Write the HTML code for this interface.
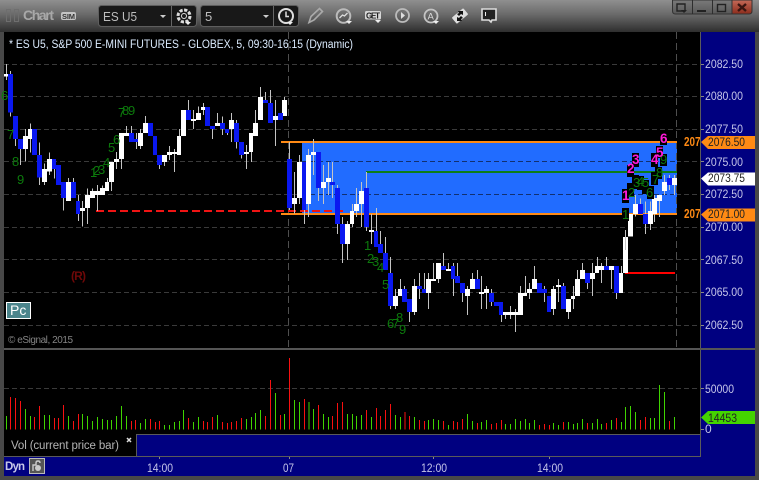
<!DOCTYPE html>
<html><head><meta charset="utf-8"><style>
html,body{margin:0;padding:0;background:#000;width:759px;height:480px;overflow:hidden}
svg{display:block}
text{font-family:"Liberation Sans",sans-serif}
.ax{fill:#c4c4e8;font-size:12px}
.g{fill:#0c7a0c;font-size:13px}
.m{fill:#ff19d8;font-size:13.500px;font-weight:bold}
</style></head><body>
<svg width="759" height="480" viewBox="0 0 759 480" xmlns="http://www.w3.org/2000/svg">
<defs>
<linearGradient id="tb" x1="0" y1="0" x2="0" y2="1"><stop offset="0" stop-color="#8f8f8f"/><stop offset=".45" stop-color="#6a6a6a"/><stop offset="1" stop-color="#2e2e2e"/></linearGradient>
<linearGradient id="cl" x1="0" y1="0" x2="0" y2="1"><stop offset="0" stop-color="#c56a58"/><stop offset="1" stop-color="#8c2c1c"/></linearGradient>
<linearGradient id="bt" x1="0" y1="0" x2="0" y2="1"><stop offset="0" stop-color="#7a7a7a"/><stop offset="1" stop-color="#585858"/></linearGradient>
<clipPath id="c207"><rect x="680" y="130" width="20" height="95"/></clipPath>
</defs>
<rect width="759" height="480" fill="#484848"/>
<rect width="759" height="32" fill="url(#tb)"/>
<rect x="4" y="32" width="751" height="444" fill="#000"/>
<rect x="701" y="32" width="54" height="444" fill="#000080"/>
<rect x="700" y="32" width="1" height="425" fill="#5a5a5a"/>

<!-- title bar -->
<g fill="none" stroke="#6e6e6e" stroke-width="1"><rect x="6.500" y="9.500" width="4" height="12"/><rect x="14.500" y="9.500" width="4" height="12"/></g>
<text x="23" y="20" font-size="14" font-weight="bold" fill="#a8a8a8" textLength="31">Chart</text>
<rect x="61" y="12" width="15" height="8" rx="2" fill="#c4c4c4"/>
<text x="62" y="19" font-size="7.500" font-weight="bold" fill="#333" textLength="13">SIM</text>
<rect x="98.500" y="5.500" width="98" height="21" rx="3" fill="#181818" stroke="#5e5e5e"/>
<rect x="200.500" y="5.500" width="98" height="21" rx="3" fill="#181818" stroke="#5e5e5e"/>
<path d="M171.500 6V26M273.500 6V26" stroke="#666"/>
<text x="103" y="21" font-size="13" fill="#bdbdbd" textLength="34" lengthAdjust="spacingAndGlyphs">ES U5</text>
<text x="205" y="21" font-size="13" fill="#bdbdbd">5</text>
<path d="M160 15h6l-3 3zM263 15h6l-3 3z" fill="#ccc"/>
<circle cx="184" cy="16" r="6" fill="none" stroke="#ddd" stroke-width="3" stroke-dasharray="3.200 1.500"/>
<circle cx="184" cy="16" r="2.500" fill="none" stroke="#ddd"/>
<path d="M185 22h6l-3 3z" fill="#eee"/>
<circle cx="286" cy="16" r="7" fill="none" stroke="#ddd" stroke-width="2"/>
<path d="M286 11.500V16.500H289" fill="none" stroke="#ddd" stroke-width="1.500"/>
<path d="M287 22h6l-3 3z" fill="#eee"/>
<path d="M309 22.500l2-6 8.500-8 3 3-8.500 8.500z" fill="none" stroke="#aaa" stroke-width="1.600"/>
<circle cx="343.500" cy="16" r="6.800" fill="none" stroke="#bbb" stroke-width="2"/>
<path d="M339.500 18l3-3 2 1 3-3" fill="none" stroke="#ddd" stroke-width="1.300"/>
<path d="M346 21h6l-3 3z" fill="#eee"/>
<rect x="365" y="11" width="16" height="8.500" rx="1.500" fill="#d6d6d6"/>
<text x="366" y="18.500" font-size="8" font-weight="bold" fill="#222" textLength="14">GET</text>
<path d="M375 20h6l-3 3z" fill="#eee"/>
<circle cx="402.500" cy="15.500" r="6.500" fill="none" stroke="#bbb" stroke-width="1.800"/>
<path d="M401 12l4 3.500-4 3.500z" fill="#ddd"/>
<circle cx="431" cy="16" r="6.500" fill="none" stroke="#c4c4c4" stroke-width="1.800"/>
<text x="427.500" y="19.500" font-size="9.500" fill="#ddd">A</text>
<path d="M433 21h6l-3 3z" fill="#eee"/>
<rect x="-7.500" y="-4" width="15" height="8" rx="1" fill="#ddd" transform="translate(460 16) rotate(-40)"/>
<path d="M458 11l5 0 0 4-2-1-2 2-2-2 2-1zM462 21l-5 0 0-4 2 1 2-2 2 2-2 1z" fill="#111"/>
<path d="M482 9h14v11h-4l-1 2-2-2h-7z" fill="#222" stroke="#ddd" stroke-width="1.600"/>
<path d="M485.500 12v4" stroke="#eee"/>
<!-- window buttons -->
<path d="M672.500 0V11q0 3 3 3H732V0z" fill="url(#bt)" stroke="#333"/>
<path d="M732 0h20v11q0 3-3 3h-17z" fill="url(#cl)" stroke="#333"/>
<path d="M692.500 0V14M712.500 0V14" stroke="#2e2e2e"/>
<path d="M677 4h8v7h-8z" fill="none" stroke="#222" stroke-width="1.400"/>
<path d="M681 10h6l-3 3z" fill="#222"/>
<path d="M697 10h9v2h-9z" fill="#222"/>
<rect x="717.500" y="4.500" width="8" height="7" fill="none" stroke="#222" stroke-width="1.400"/>
<path d="M738 4l8 7M746 4l-8 7" stroke="#3a1510" stroke-width="2.400"/>

<!-- grid -->
<g stroke="#3a3a3a" stroke-dasharray="5 3" shape-rendering="crispEdges">
<path d="M4 64.500H700M4 96.500H700M4 129.500H700M4 161.500H700M4 194.500H700M4 227.500H700M4 259.500H700M4 292.500H700M4 325.500H700"/>
<path d="M4 388.500H700" />
</g>

<!-- zone -->
<rect x="302" y="143" width="375" height="70" fill="#216cff"/>
<g stroke="#123070" stroke-dasharray="5 3" shape-rendering="crispEdges"><path d="M302 161.500H677M302 194.500H677"/></g>
<path d="M288.500 32V348M676.500 32V348" stroke="#4f4f4f" stroke-dasharray="7 4" shape-rendering="crispEdges"/>
<rect x="366" y="171" width="311" height="2" fill="#0d7d18"/>
<rect x="281" y="141" width="396" height="2" fill="#ff8a14"/>
<rect x="281" y="213" width="396" height="2" fill="#ff8a14"/>
<path d="M96 211H343" stroke="#f01414" stroke-width="2" stroke-dasharray="8 4" shape-rendering="crispEdges"/>
<rect x="625" y="272" width="50" height="2" fill="#f00"/>

<!-- candles left -->
<g transform="translate(0,60) scale(.33333)" shape-rendering="crispEdges">
<path fill="none" stroke="#c4c4c4" stroke-width="3" d="M19.500 12V60M31.500 33V170M46.500 168V258M61.500 237V315M76.500 207V305M91.500 190V277M103.500 207V285M118.500 247V375M133.500 310V375M148.500 277V345M163.500 297V355M175.500 315V375M190.500 366V452M205.500 354V423M220.500 354V414M235.500 405V483M247.500 423V500M262.500 385V492M277.500 385V414M292.500 375V453M307.500 376V405M322.500 354V393M334.500 306V393M349.500 276V327M364.500 219V327M379.500 198V228M394.500 198V246M409.500 219V267M421.500 207V267M436.500 168V219M451.500 189V228M466.500 228V285M478.500 285V327M493.500 285V318M508.500 258V300M523.500 267V336M538.500 207V285M550.500 150V228M565.500 120V180M580.500 150V207M595.500 140V180M610.500 129V165M622.500 141V198M637.500 198V237M652.500 159V198M667.500 170V225M682.500 207V225M694.500 159V246M709.500 180V265M724.500 246V295M739.500 255V327M754.500 219V306M766.500 150V228M781.500 81V180M796.500 96V129M811.500 90V189M826.500 120V258M841.500 159V180M853.500 111V168"/>
<path fill="#fff" d="M12 42h12v8h-12zM69 228h15v39h-15zM84 207h12v30h-12zM126 327h15v39h-15zM141 297h15v38h-15zM198 366h15v57h-15zM240 444h15v9h-15zM255 405h15v39h-15zM270 393h15v21h-15zM285 393h15v12h-15zM300 384h15v21h-15zM315 366h12v27h-12zM327 306h15v60h-15zM342 297h15v9h-15zM357 219h15v78h-15zM372 219h15v9h-15zM414 219h15v39h-15zM429 189h15v30h-15zM486 285h15v21h-15zM501 276h15v9h-15zM516 276h15v6h-15zM531 228h12v57h-12zM543 150h15v78h-15zM573 177h15v6h-15zM588 159h15v21h-15zM603 141h12v9h-12zM645 189h15v9h-15zM687 180h15v27h-15zM732 276h15v6h-15zM747 219h12v57h-12zM759 189h15v39h-15zM774 111h15v69h-15zM819 168h15v12h-15zM846 120h15v48h-15z"/>
<path fill="#0a18f0" d="M24 42h15v116h-15zM39 168h15v69h-15zM54 237h15v30h-15zM96 207h15v78h-15zM111 285h15v68h-15zM156 297h12v30h-12zM168 315h15v60h-15zM183 366h15v48h-15zM213 366h15v48h-15zM228 423h12v39h-12zM387 219h15v27h-15zM402 237h12v9h-12zM444 189h15v39h-15zM459 228h12v57h-12zM471 285h15v30h-15zM558 150h15v30h-15zM615 141h15v57h-15zM630 198h15v9h-15zM660 189h15v18h-15zM675 207h12v12h-12zM702 189h15v57h-15zM717 246h15v39h-15zM789 120h15v9h-15zM804 129h15v60h-15zM834 159h15v21h-15z"/>
</g>
<!-- candles mid -->
<g transform="translate(270,130) scale(.33333)" shape-rendering="crispEdges">
<path fill="none" stroke="#c4c4c4" stroke-width="3" d="M58.500 36V240M73.500 126V250M88.500 75V222M103.500 96V282M115.500 57V261M130.500 27V135M145.500 66V213M160.500 105V222M175.500 96V195M187.500 96V204M202.500 165V312M217.500 261V399M232.500 273V390M247.500 222V291M259.500 174V261M274.500 156V291M289.500 126V303M304.500 252V342M319.500 234V351M331.500 303V369M346.500 321V420M361.500 381V537M376.500 477V537M391.500 447V498M403.500 468V516M418.500 507V576M433.500 447V555M448.500 429V507M463.500 429V489M475.500 429V537M490.500 399V453M505.500 399V459M520.500 369V420M535.500 399V423M550.500 399V498M562.500 399V459M577.500 459V516M592.500 468V555"/>
<path fill="#fff" d="M66 204h15v18h-15zM81 96h15v108h-15zM108 75h15v147h-15zM123 66h15v9h-15zM153 156h15v18h-15zM168 144h15v12h-15zM225 282h15v60h-15zM240 243h12v39h-12zM252 222h15v21h-15zM267 183h15v39h-15zM297 300h15v6h-15zM369 498h15v30h-15zM384 477h12v21h-12zM426 468h15v78h-15zM468 447h15v42h-15zM483 447h15v6h-15zM498 399h15v48h-15zM528 417h15v6h-15zM585 477h15v21h-15z"/>
<path fill="#0a18f0" d="M51 87h15v147h-15zM96 96h12v144h-12zM138 66h15v108h-15zM180 156h15v9h-15zM195 174h15v108h-15zM210 282h15v60h-15zM282 174h15v117h-15zM312 303h12v48h-12zM324 342h15v27h-15zM339 369h15v51h-15zM354 429h15v99h-15zM396 477h15v39h-15zM411 507h15v39h-15zM441 468h15v9h-15zM456 477h12v12h-12zM513 408h15v12h-15zM543 408h12v39h-12zM555 438h15v21h-15zM570 459h15v30h-15z"/>
</g>
<!-- candles right -->
<g transform="translate(440,230) scale(.33333)" shape-rendering="crispEdges">
<path fill="none" stroke="#c4c4c4" stroke-width="3" d="M82.500 168V255M97.500 129V177M112.500 120V177M124.500 138V237M139.500 168V237M154.500 177V228M169.500 216V228M184.500 216V276M196.500 246V267M211.500 228V267M226.500 237V306M241.500 168V255M256.500 138V198M268.500 159V207M283.500 108V177M298.500 159V189M313.500 168V216M328.500 198V246M340.500 168V255M355.500 147V216M370.500 159V237M385.500 207V267M400.500 168V237M412.500 120V198M427.500 99V147M442.500 129V177M457.500 99V198M472.500 81V129M484.500 99V159M499.500 81V120M514.500 108V177M529.500 108V207M544.500 108V129M556.500 0V129"/>
<path fill="#fff" d="M75 177h15v21h-15zM90 147h15v30h-15zM117 186h15v6h-15zM132 177h15v12h-15zM189 246h15v9h-15zM204 246h15v9h-15zM219 246h15v9h-15zM234 189h15v66h-15zM249 189h12v9h-12zM261 177h15v12h-15zM276 147h15v30h-15zM333 177h15v60h-15zM348 165h15v6h-15zM378 207h15v39h-15zM393 198h12v9h-12zM405 147h15v51h-15zM420 120h15v27h-15zM450 129h15v18h-15zM465 108h12v21h-12zM477 108h15v12h-15zM507 108h15v12h-15zM537 129h12v60h-12zM549 21h15v108h-15z"/>
<path fill="#0a18f0" d="M105 147h15v30h-15zM147 189h15v27h-15zM162 216h15v12h-15zM177 216h12v39h-12zM291 159h15v30h-15zM306 177h15v12h-15zM321 198h12v48h-12zM363 168h15v69h-15zM435 129h15v30h-15zM492 108h15v12h-15zM522 108h15v81h-15z"/>
</g>
<!-- candles end -->
<g transform="translate(560,120) scale(.33333)" shape-rendering="crispEdges">
<path fill="none" stroke="#c4c4c4" stroke-width="3" d="M196.500 340V390M226.500 225V290M241.500 235V282M256.500 245V342M271.500 245V330M283.500 225V306M298.500 225V291M313.500 165V225M328.500 165V210M343.500 165V225"/>
<path fill="#fff" d="M204 282h15v68h-15zM219 252h15v30h-15zM264 273h15v39h-15zM276 234h15v48h-15zM291 225h15v18h-15zM306 186h15v27h-15zM336 174h15v21h-15z"/>
<path fill="#0a18f0" d="M234 252h15v30h-15zM249 282h15v30h-15zM321 174h15v21h-15z"/>
</g>

<!-- green digits -->
<g class="g">
<text x="1" y="100">6</text><text x="7" y="139">7</text><text x="12" y="166">8</text><text x="17" y="184">9</text>
<text x="118" y="117">7</text><text x="122" y="115">8</text><text x="128" y="115">9</text>
<text x="113" y="144">6</text><text x="108" y="152">5</text><text x="103" y="167">4</text>
<text x="90" y="177">1</text><text x="93" y="175">2</text><text x="98" y="174">3</text>
<text x="364" y="250">1</text><text x="367" y="263">2</text><text x="372" y="266">3</text><text x="377" y="272">4</text>
<text x="382" y="289">5</text><text x="387" y="328">6</text><text x="392" y="328">7</text><text x="396" y="322">8</text><text x="399" y="334">9</text>
</g>

<!-- numbered boxes at right -->
<g fill="#000" shape-rendering="crispEdges">
<rect x="622" y="189" width="7" height="14"/><rect x="622" y="208" width="7" height="13"/><rect x="627" y="183" width="7" height="14"/><rect x="627" y="165" width="7" height="12"/><rect x="632" y="153" width="7" height="14"/>
<rect x="632" y="175" width="7" height="14"/><rect x="637" y="176" width="7" height="14"/><rect x="642" y="180" width="7" height="14"/><rect x="647" y="186" width="7" height="13"/><rect x="651" y="172" width="7" height="13"/>
<rect x="655" y="167" width="7" height="12"/><rect x="651" y="153" width="7" height="14"/><rect x="656" y="146" width="7" height="12"/><rect x="660" y="154" width="7" height="12"/><rect x="660" y="135" width="7" height="10"/>
</g>
<g class="g">
<text x="622" y="219">1</text><text x="628" y="197">2</text><text x="633" y="187">3</text><text x="637" y="186">4</text><text x="642" y="187">5</text><text x="646" y="197">6</text><text x="652" y="184">7</text><text x="656" y="177">8</text><text x="660" y="164">9</text>
</g>
<g class="m">
<text x="622" y="200">1</text><text x="627" y="173">2</text><text x="632" y="164">3</text><text x="651" y="164">4</text><text x="656" y="157">5</text><text x="660" y="143">6</text>
</g>

<!-- price axis -->
<g class="ax">
<text x="705" y="68" textLength="38" lengthAdjust="spacingAndGlyphs">2082.50</text><text x="705" y="100" textLength="38" lengthAdjust="spacingAndGlyphs">2080.00</text><text x="705" y="133" textLength="38" lengthAdjust="spacingAndGlyphs">2077.50</text><text x="705" y="166" textLength="38" lengthAdjust="spacingAndGlyphs">2075.00</text><text x="705" y="198" textLength="38" lengthAdjust="spacingAndGlyphs">2072.50</text><text x="705" y="231" textLength="38" lengthAdjust="spacingAndGlyphs">2070.00</text><text x="705" y="264" textLength="38" lengthAdjust="spacingAndGlyphs">2067.50</text><text x="705" y="296" textLength="38" lengthAdjust="spacingAndGlyphs">2065.00</text><text x="705" y="329" textLength="38" lengthAdjust="spacingAndGlyphs">2062.50</text>
<text x="705" y="393" textLength="29" lengthAdjust="spacingAndGlyphs">50000</text><text x="705" y="433">0</text>
</g>
<path d="M701 64.500h3M701 96.500h3M701 129.500h3M701 161.500h3M701 194.500h3M701 227.500h3M701 259.500h3M701 292.500h3M701 325.500h3M701 388.500h3M701 429.500h3" stroke="#888"/>
<path d="M701 142l7-6h47v13h-47zM701 214.500l7-6h47v13h-47z" fill="#ff8a14"/>
<path d="M701 178.500l7-6h47v13h-47z" fill="#fff"/>
<path d="M701 417.500l7-6.500h47v13h-47z" fill="#44d400"/>
<text x="708" y="146" font-size="12" fill="#222" textLength="37" lengthAdjust="spacingAndGlyphs">2076.50</text>
<text x="708" y="182" font-size="12" fill="#222" textLength="37" lengthAdjust="spacingAndGlyphs">2073.75</text>
<text x="708" y="218" font-size="12" fill="#222" textLength="37" lengthAdjust="spacingAndGlyphs">2071.00</text>
<text x="708" y="422" font-size="12" fill="#222" textLength="29" lengthAdjust="spacingAndGlyphs">14453</text>
<g clip-path="url(#c207)">
<text x="684" y="146" font-size="13" font-weight="bold" fill="#ff8a14" textLength="22" lengthAdjust="spacingAndGlyphs">2076</text>
<text x="684" y="218" font-size="13" font-weight="bold" fill="#ff8a14" textLength="22" lengthAdjust="spacingAndGlyphs">2071</text>
</g>

<!-- header text -->
<text x="9" y="48" font-size="11.500" fill="#dcecff" textLength="344" lengthAdjust="spacingAndGlyphs">* ES U5, S&amp;P 500 E-MINI FUTURES - GLOBEX, 5, 09:30-16:15 (Dynamic)</text>
<text x="71" y="280" font-size="12" font-weight="bold" fill="#6e0808" textLength="15">(R)</text>
<rect x="6.500" y="302.500" width="24" height="16" fill="#4b858c" stroke="#fff"/>
<text x="10" y="315" font-size="14" fill="#fff">Pc</text>
<text x="8" y="343" font-size="10" fill="#858585" textLength="65">© eSignal, 2015</text>

<!-- separator -->
<rect x="4" y="348" width="751" height="2" fill="#555"/>

<!-- volume -->
<g transform="translate(.5,340) scale(.33333)" shape-rendering="crispEdges" fill="none" stroke-width="3.050">
<path stroke="#3fd400" d="M18 228V268M75 207V268M90 228V268M132 225V268M147 225V268M204 228V268M246 222V268M261 228V268M276 243V268M291 231V268M306 237V268M321 240V268M333 240V268M348 228V268M363 198V268M378 228V268M420 249V268M435 237V268M492 255V268M507 255V268M522 246V268M537 243V268M549 210V268M579 246V268M594 231V268M651 225V268M738 237V268M753 231V268M765 219V268M780 210V268M825 159V268M852 222V268M882 180V268M897 186V268M925 186V268M939 207V268M969 222V268M984 231V268M1041 222V268M1056 222V268M1068 228V268M1083 225V268M1113 231V268"/>
<path stroke="#f81010" d="M30 171V268M45 174V268M60 183V268M102 231V268M117 198V268M162 234V268M174 234V268M189 195V268M219 243V268M234 222V268M393 243V268M405 240V268M450 237V268M465 246V268M477 243V268M564 234V268M609 243V268M621 246V268M636 231V268M666 246V268M681 249V268M693 246V268M708 243V268M723 234V268M795 228V268M810 120V268M840 225V268M867 54V268M912 177V268M954 195V268M996 228V268M1011 189V268M1026 186V268M1098 210V268M1128 204V268"/>
</g>
<g transform="translate(380.5,340) scale(.33333)" shape-rendering="crispEdges" fill="none" stroke-width="3.050">
<path stroke="#3fd400" d="M45 225V268M60 231V268M102 231V268M144 240V268M159 237V268M174 240V268M204 255V268M261 222V268M276 243V268M303 246V268M318 240V268M375 252V268M390 252V268M405 237V268M420 243V268M435 237V268M447 249V268M462 240V268M519 249V268M534 255V268M564 246V268M579 252V268M591 249V268M606 237V268M636 249V268M651 237V268M663 252V268M693 240V268M723 246V268M735 201V268M750 198V268M765 216V268M810 234V268M822 234V268M837 135V268M852 156V268M882 231V268"/>
<path stroke="#f81010" d="M0 228V268M15 210V268M30 192V268M73 216V268M87 228V268M117 240V268M132 243V268M189 243V268M219 243V268M231 246V268M246 237V268M291 249V268M333 252V268M348 249V268M363 240V268M477 255V268M492 252V268M507 255V268M549 246V268M621 249V268M678 249V268M708 234V268M780 240V268M795 231V268M867 243V268"/>
</g>

<!-- lower bars -->
<rect x="137" y="435" width="563" height="21" fill="#000080"/>
<rect x="136" y="434" width="565" height="1" fill="#5a5a5a"/>
<rect x="136" y="435" width="1" height="21" fill="#5a5a5a"/>
<rect x="4" y="456" width="697" height="1" fill="#5a5a5a"/>
<text x="11" y="449" font-size="11.500" fill="#b4b4b4" textLength="108">Vol (current price bar)</text>
<path d="M127 438l4 4M131 438l-4 4" stroke="#ddd" stroke-width="1.500"/>
<rect x="4" y="457" width="697" height="19" fill="#000080"/>
<text x="5" y="470" font-size="11.500" font-weight="bold" fill="#c8c8e8" textLength="20">Dyn</text>
<rect x="29.500" y="458.500" width="15" height="15" fill="#555" stroke="#bbb"/>
<path d="M33 471v-6h3v-2q0-2 2-2t2 2" fill="none" stroke="#ccc" stroke-width="1.400"/>
<circle cx="38" cy="468" r="3" fill="#ccc"/>
<path d="M159.500 457v2M289.500 457v2M433.500 457v2M549.500 457v2" stroke="#888"/>
<g class="ax">
<text x="147" y="472" textLength="26" lengthAdjust="spacingAndGlyphs">14:00</text><text x="283" y="472" textLength="11" lengthAdjust="spacingAndGlyphs">07</text><text x="421" y="472" textLength="26" lengthAdjust="spacingAndGlyphs">12:00</text><text x="537" y="472" textLength="26" lengthAdjust="spacingAndGlyphs">14:00</text>
</g>
</svg>
</body></html>
